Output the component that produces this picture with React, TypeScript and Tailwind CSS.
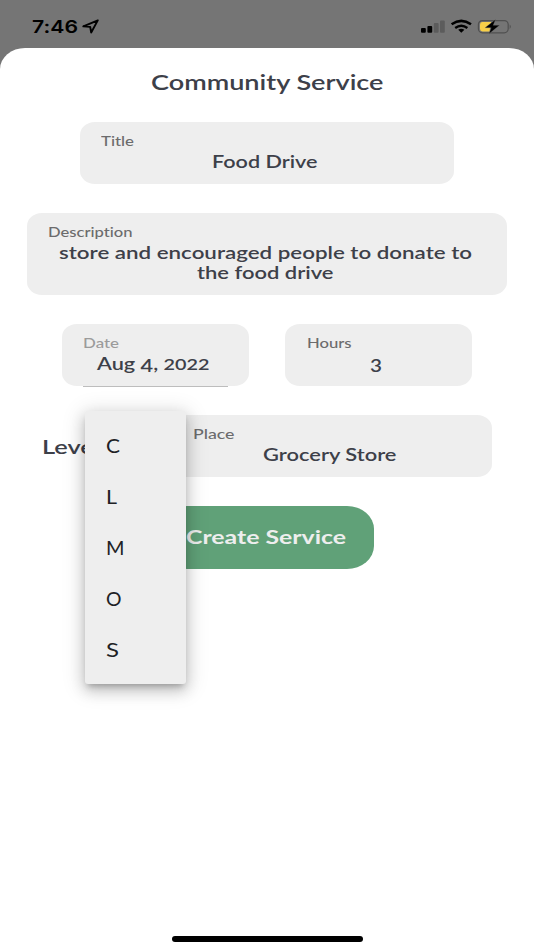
import { useLayoutEffect, useRef, useState } from 'react';
import type { ReactNode } from 'react';

/** A single line of text, widened horizontally to fill `width` pixels. */
function Line({ width, className = '', children }: { width: number; className?: string; children: ReactNode }) {
  const ref = useRef<HTMLSpanElement>(null);
  const [ratio, setRatio] = useState(1.15);
  useLayoutEffect(() => {
    const measure = () => {
      const natural = ref.current?.getBoundingClientRect().width ?? 0;
      const current = ref.current ? new DOMMatrix(getComputedStyle(ref.current).transform).a : 1;
      if (natural) setRatio(width / (natural / current));
    };
    measure();
    document.fonts.ready.then(measure);
  }, [width]);
  return (
    <span className={`block whitespace-nowrap ${className}`} style={{ width }}>
      <span ref={ref} className="inline-block origin-left" style={{ transform: `scaleX(${ratio})` }}>
        {children}
      </span>
    </span>
  );
}

const label = 'text-[13px] leading-4 font-medium';
const value = 'text-[17px] leading-5 font-semibold text-[#3d4049]';
const field = 'h-[62px] rounded-[15px/13px] bg-[#eeeeee] pt-2.5';

function StatusBar() {
  return (
    <header className="flex h-12 items-start justify-between bg-[#757575] pt-[16px] text-black">
      <div className="flex items-center pl-[32px]">
        <Line width={46} className="font-[Inter] text-[17.5px] leading-[21px] font-semibold">7:46</Line>
        <svg className="ml-[4px]" width="18" height="16" viewBox="0 0 18 16" fill="none" stroke="black" strokeWidth="1.9" strokeLinejoin="round">
          <path d="M15.8 1.4 1.3 7.3 8.2 7.9 9.2 13.5Z" />
        </svg>
      </div>
      <div className="flex pr-[21px]">
        <svg width="93" height="20" viewBox="0 0 93 20">
          <rect x="1" y="12" width="4.8" height="4.7" rx="1" />
          <rect x="7.4" y="10" width="4.8" height="6.7" rx="1" />
          <rect x="13.8" y="7" width="4.8" height="9.7" rx="1" fill="#5c5c5c" />
          <rect x="20" y="4.5" width="4.8" height="12.2" rx="1" fill="#5c5c5c" />
          <g fill="none" stroke="black">
            <path d="M31.6 8.3Q41.3 1.5 51 8.3" strokeWidth="2.5" />
            <path d="M35.2 12Q41.3 7.5 47.4 12" strokeWidth="2.3" />
          </g>
          <path d="M38.2 13.8Q41.3 11.8 44.4 13.8L41.3 16.8Z" />
          <rect x="58.4" y="4.6" width="29.8" height="12.2" rx="4" fill="none" stroke="#505050" strokeWidth="1.2" />
          <path d="M62.5 6H71l-1.5 9.4h-7q-2.5 0-2.5-2.4V8.4Q60 6 62.5 6Z" fill="#f8cf48" />
          <path d="M89.7 8.5q2.2 2.2 0 4.4Z" fill="#505050" />
          <path d="M75.5 3.5 65 11.8H71.2L69 17.7 79.5 9.3H73.2Z" stroke="#757575" strokeWidth=".3" />
        </svg>
      </div>
    </header>
  );
}

function LevelMenu() {
  const options = [
    { name: 'C', width: 14 },
    { name: 'L', width: 11 },
    { name: 'M', width: 18.5 },
    { name: 'O', width: 15.5 },
    { name: 'S', width: 13 },
  ];
  return (
    <ul className="absolute top-[-4px] left-[85px] h-[273px] w-[101px] rounded-[3px] bg-[#eeeeee] pt-[10px] shadow-[0_5px_6px_-3px_rgba(0,0,0,0.24),0_6px_14px_1px_rgba(0,0,0,0.16),0_3px_22px_3px_rgba(0,0,0,0.12)]">
      {options.map((o) => (
        <li key={o.name} className="flex h-[50.8px] items-center pl-[21px]">
          <Line width={o.width} className="text-[18.5px] leading-6 text-[#202124]">{o.name}</Line>
        </li>
      ))}
    </ul>
  );
}

export default function App() {
  return (
    <div className="h-[950px] w-[534px] overflow-hidden bg-[#757575] font-[Lato,sans-serif] [font-variant-ligatures:none]">
      <StatusBar />
      <main className="flex h-[902px] flex-col rounded-[25px_25px_0_0/21px_21px_0_0] bg-white pt-[20px]">
        <h1 className="flex justify-center">
          <Line width={232.5} className="text-[21px] leading-7 font-semibold text-[#3d4049]">Community Service</Line>
        </h1>

        <div className={`${field} mx-auto mt-[26px] w-[374px]`}>
          <Line width={33} className={`${label} mt-px ml-[21px] text-[#6b6b6c]`}>Title</Line>
          <Line width={105.5} className={`${value} mt-[3px] ml-[131.5px]`}>Food Drive</Line>
        </div>

        <div className="mx-auto mt-[29px] h-[82px] w-[480px] rounded-[15px/13px] bg-[#eeeeee] pt-[11px]">
          <Line width={84.5} className={`${label} ml-[21px] text-[#6b6b6c]`}>Description</Line>
          <Line width={413} className={`${value} mt-[3px] ml-[31.5px]`}>store and encouraged people to donate to</Line>
          <Line width={136.5} className={`${value} ml-[169.5px]`}>the food drive</Line>
        </div>

        <div className="mt-[29px] flex gap-9 pl-[62px]">
          <div className={`${field} flex w-[187px] flex-col`}>
            <Line width={36} className={`${label} mt-px ml-[21px] text-[#9b9b9b]`}>Date</Line>
            <Line width={112.5} className={`${value} mt-[3px] ml-[35px]`}>
              Aug <span className="relative top-[2px]">4</span>, <span className="text-[15.5px]">2022</span>
            </Line>
            <div className="mt-auto -mb-px ml-[21px] h-px w-[145px] bg-[#bdbdbd]" />
          </div>
          <div className={`${field} w-[187px]`}>
            <Line width={44.5} className={`${label} mt-px ml-[21.5px] text-[#6b6b6c]`}>Hours</Line>
            <Line width={12} className={`${value} mt-[5px] ml-[85px]`}>3</Line>
          </div>
        </div>

        <div className="relative mt-[29px]">
          <div className="flex items-start">
            <Line width={58} className="mt-[20px] ml-[42px] text-[19px] leading-6 font-semibold text-[#3d4049]">Level</Line>
            <div className={`${field} ml-[71.5px] w-[320px]`}>
              <Line width={41.5} className={`${label} mt-px ml-[21.5px] text-[#6b6b6c]`}>Place</Line>
              <Line width={133.5} className={`${value} mt-[3px] ml-[91px]`}>Grocery Store</Line>
            </div>
          </div>
          <button className="mx-auto mt-[29px] flex h-[62.5px] w-[214px] items-start rounded-[27px/23px] bg-[#60a178] pt-[19px] pl-[26px]">
            <Line width={160} className="text-left text-[19.5px] leading-6 font-bold text-[#eeeeee]">Create Service</Line>
          </button>
          <LevelMenu />
        </div>

        <div className="mx-auto mt-auto mb-[8.5px] h-[5.5px] w-[191px] rounded-full bg-black" />
      </main>
    </div>
  );
}
